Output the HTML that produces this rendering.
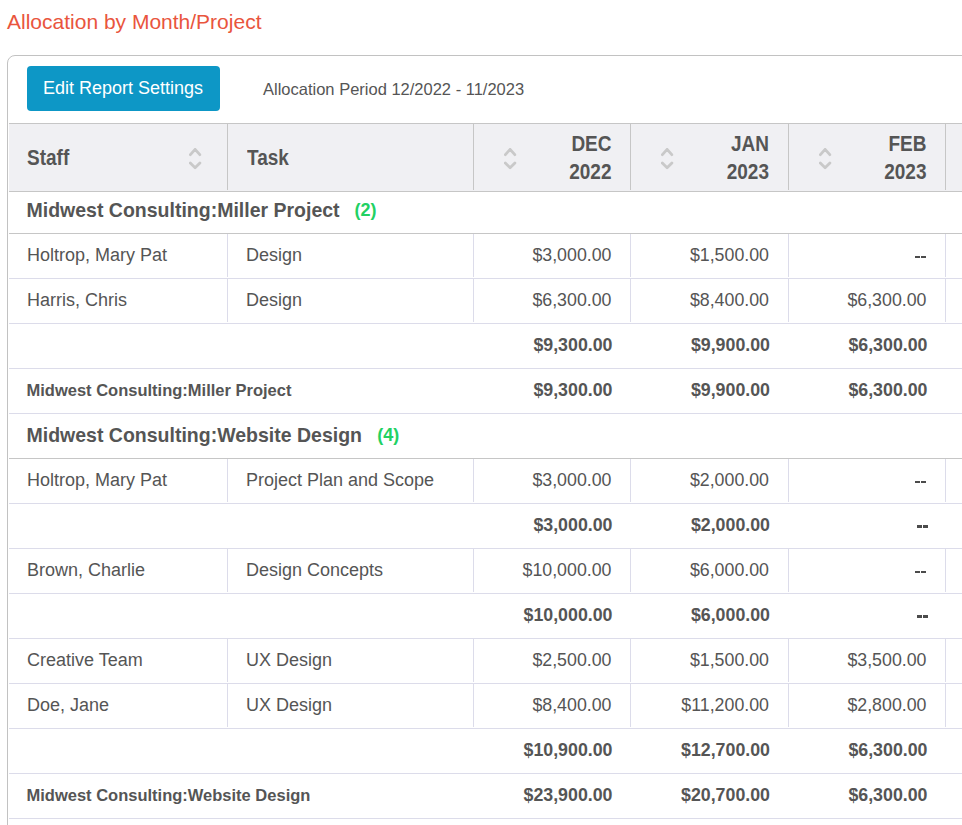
<!DOCTYPE html>
<html><head><meta charset="utf-8"><style>
html,body{margin:0;padding:0;background:#fff;width:962px;height:825px;overflow:hidden;position:relative}
.t{position:absolute;line-height:0;white-space:nowrap;font-family:"Liberation Sans", sans-serif}
.r{width:400px;text-align:right}
</style></head><body>
<div class="t" style="left:7px;top:22px;font-size:21px;font-weight:400;color:#e9553d;">Allocation by Month/Project</div>
<div style="position:absolute;left:7px;top:55px;width:1000px;height:900px;border:1px solid #c2c2c2;border-radius:8px;box-sizing:border-box"></div>
<div style="position:absolute;left:27px;top:66px;width:193px;height:45px;background:#0d97c6;border-radius:4px"></div>
<div class="t" style="left:43px;top:88px;font-size:18px;font-weight:400;color:#ffffff;">Edit Report Settings</div>
<div class="t" style="left:263px;top:89px;font-size:16.5px;font-weight:400;color:#555555;">Allocation Period 12/2022 - 11/2023</div>
<div style="position:absolute;left:9px;top:123px;width:960px;height:1px;background:#c6c6c6"></div>
<div style="position:absolute;left:9px;top:124px;width:960px;height:67px;background:#f0f0f3"></div>
<div style="position:absolute;left:9px;top:191px;width:960px;height:1px;background:#c6c6c6"></div>
<div style="position:absolute;left:227px;top:124px;width:1px;height:66px;background:#c6c6c6"></div>
<div style="position:absolute;left:473px;top:124px;width:1px;height:66px;background:#c6c6c6"></div>
<div style="position:absolute;left:630px;top:124px;width:1px;height:66px;background:#c6c6c6"></div>
<div style="position:absolute;left:788px;top:124px;width:1px;height:66px;background:#c6c6c6"></div>
<div style="position:absolute;left:945px;top:124px;width:1px;height:66px;background:#c6c6c6"></div>
<div class="t" style="left:27px;top:159px;font-size:19px;font-weight:700;color:#555555;transform:scaleY(1.16);transform-origin:0 6px;">Staff</div>
<div class="t" style="left:247px;top:159px;font-size:19px;font-weight:700;color:#555555;transform:scaleY(1.16);transform-origin:0 6px;">Task</div>
<div class="t r" style="left:211.5px;top:145px;font-size:19px;font-weight:700;color:#555555;transform:scaleY(1.16);transform-origin:0 6px;">DEC</div>
<div class="t r" style="left:211.5px;top:173px;font-size:19px;font-weight:700;color:#555555;transform:scaleY(1.16);transform-origin:0 6px;">2022</div>
<div class="t r" style="left:369px;top:145px;font-size:19px;font-weight:700;color:#555555;transform:scaleY(1.16);transform-origin:0 6px;">JAN</div>
<div class="t r" style="left:369px;top:173px;font-size:19px;font-weight:700;color:#555555;transform:scaleY(1.16);transform-origin:0 6px;">2023</div>
<div class="t r" style="left:526.5px;top:145px;font-size:19px;font-weight:700;color:#555555;transform:scaleY(1.16);transform-origin:0 6px;">FEB</div>
<div class="t r" style="left:526.5px;top:173px;font-size:19px;font-weight:700;color:#555555;transform:scaleY(1.16);transform-origin:0 6px;">2023</div>
<svg style="position:absolute;left:189px;top:148px" width="13" height="22" viewBox="0 0 13 22"><g fill="none" stroke="#c9c9c9" stroke-width="2.8" stroke-linecap="round" stroke-linejoin="round"><polyline points="1.4,6.7 6.1,1.3 10.8,6.7"/><polyline points="1.3,15.1 6.1,19.8 10.9,15.1"/></g></svg>
<svg style="position:absolute;left:504px;top:148px" width="13" height="22" viewBox="0 0 13 22"><g fill="none" stroke="#c9c9c9" stroke-width="2.8" stroke-linecap="round" stroke-linejoin="round"><polyline points="1.4,6.7 6.1,1.3 10.8,6.7"/><polyline points="1.3,15.1 6.1,19.8 10.9,15.1"/></g></svg>
<svg style="position:absolute;left:661px;top:148px" width="13" height="22" viewBox="0 0 13 22"><g fill="none" stroke="#c9c9c9" stroke-width="2.8" stroke-linecap="round" stroke-linejoin="round"><polyline points="1.4,6.7 6.1,1.3 10.8,6.7"/><polyline points="1.3,15.1 6.1,19.8 10.9,15.1"/></g></svg>
<svg style="position:absolute;left:819px;top:148px" width="13" height="22" viewBox="0 0 13 22"><g fill="none" stroke="#c9c9c9" stroke-width="2.8" stroke-linecap="round" stroke-linejoin="round"><polyline points="1.4,6.7 6.1,1.3 10.8,6.7"/><polyline points="1.3,15.1 6.1,19.8 10.9,15.1"/></g></svg>
<div style="position:absolute;left:9px;top:233px;width:960px;height:1px;background:#c6c6c6"></div>
<div class="t" style="left:26.5px;top:210px;font-size:19.5px;font-weight:700;color:#555555;transform:scaleY(1.07);transform-origin:0 7px;">Midwest Consulting:Miller Project</div>
<div class="t" style="left:354.5px;top:210px;font-size:18px;font-weight:700;color:#22d163;">(2)</div>
<div style="position:absolute;left:9px;top:278px;width:960px;height:1px;background:#dcdcea"></div>
<div style="position:absolute;left:227px;top:234px;width:1px;height:43px;background:#dcdcea"></div>
<div style="position:absolute;left:473px;top:234px;width:1px;height:43px;background:#dcdcea"></div>
<div style="position:absolute;left:630px;top:234px;width:1px;height:43px;background:#dcdcea"></div>
<div style="position:absolute;left:788px;top:234px;width:1px;height:43px;background:#dcdcea"></div>
<div style="position:absolute;left:945px;top:234px;width:1px;height:43px;background:#dcdcea"></div>
<div class="t" style="left:27px;top:255px;font-size:18px;font-weight:400;color:#555555;">Holtrop, Mary Pat</div>
<div class="t" style="left:246px;top:255px;font-size:18px;font-weight:400;color:#555555;">Design</div>
<div class="t r" style="left:211.5px;top:255px;font-size:17.8px;font-weight:400;color:#555555;">$3,000.00</div>
<div class="t r" style="left:369px;top:255px;font-size:17.8px;font-weight:400;color:#555555;">$1,500.00</div>
<div style="position:absolute;left:915px;top:256px;width:5px;height:2px;background:#4b4b4b"></div>
<div style="position:absolute;left:921px;top:256px;width:5px;height:2px;background:#4b4b4b"></div>
<div style="position:absolute;left:9px;top:323px;width:960px;height:1px;background:#dcdcea"></div>
<div style="position:absolute;left:227px;top:279px;width:1px;height:43px;background:#dcdcea"></div>
<div style="position:absolute;left:473px;top:279px;width:1px;height:43px;background:#dcdcea"></div>
<div style="position:absolute;left:630px;top:279px;width:1px;height:43px;background:#dcdcea"></div>
<div style="position:absolute;left:788px;top:279px;width:1px;height:43px;background:#dcdcea"></div>
<div style="position:absolute;left:945px;top:279px;width:1px;height:43px;background:#dcdcea"></div>
<div class="t" style="left:27px;top:300px;font-size:18px;font-weight:400;color:#555555;">Harris, Chris</div>
<div class="t" style="left:246px;top:300px;font-size:18px;font-weight:400;color:#555555;">Design</div>
<div class="t r" style="left:211.5px;top:300px;font-size:17.8px;font-weight:400;color:#555555;">$6,300.00</div>
<div class="t r" style="left:369px;top:300px;font-size:17.8px;font-weight:400;color:#555555;">$8,400.00</div>
<div class="t r" style="left:526.5px;top:300px;font-size:17.8px;font-weight:400;color:#555555;">$6,300.00</div>
<div style="position:absolute;left:9px;top:368px;width:960px;height:1px;background:#dcdcea"></div>
<div class="t r" style="left:212.5px;top:345px;font-size:17.8px;font-weight:700;color:#555555;">$9,300.00</div>
<div class="t r" style="left:370px;top:345px;font-size:17.8px;font-weight:700;color:#555555;">$9,900.00</div>
<div class="t r" style="left:527.5px;top:345px;font-size:17.8px;font-weight:700;color:#555555;">$6,300.00</div>
<div style="position:absolute;left:9px;top:413px;width:960px;height:1px;background:#dcdcea"></div>
<div class="t" style="left:26.5px;top:390px;font-size:16.5px;font-weight:700;color:#555555;">Midwest Consulting:Miller Project</div>
<div class="t r" style="left:212.5px;top:390px;font-size:17.8px;font-weight:700;color:#555555;">$9,300.00</div>
<div class="t r" style="left:370px;top:390px;font-size:17.8px;font-weight:700;color:#555555;">$9,900.00</div>
<div class="t r" style="left:527.5px;top:390px;font-size:17.8px;font-weight:700;color:#555555;">$6,300.00</div>
<div style="position:absolute;left:9px;top:458px;width:960px;height:1px;background:#c6c6c6"></div>
<div class="t" style="left:26.5px;top:435px;font-size:19.5px;font-weight:700;color:#555555;transform:scaleY(1.07);transform-origin:0 7px;">Midwest Consulting:Website Design</div>
<div class="t" style="left:377.3px;top:435px;font-size:18px;font-weight:700;color:#22d163;">(4)</div>
<div style="position:absolute;left:9px;top:503px;width:960px;height:1px;background:#dcdcea"></div>
<div style="position:absolute;left:227px;top:459px;width:1px;height:43px;background:#dcdcea"></div>
<div style="position:absolute;left:473px;top:459px;width:1px;height:43px;background:#dcdcea"></div>
<div style="position:absolute;left:630px;top:459px;width:1px;height:43px;background:#dcdcea"></div>
<div style="position:absolute;left:788px;top:459px;width:1px;height:43px;background:#dcdcea"></div>
<div style="position:absolute;left:945px;top:459px;width:1px;height:43px;background:#dcdcea"></div>
<div class="t" style="left:27px;top:480px;font-size:18px;font-weight:400;color:#555555;">Holtrop, Mary Pat</div>
<div class="t" style="left:246px;top:480px;font-size:18px;font-weight:400;color:#555555;">Project Plan and Scope</div>
<div class="t r" style="left:211.5px;top:480px;font-size:17.8px;font-weight:400;color:#555555;">$3,000.00</div>
<div class="t r" style="left:369px;top:480px;font-size:17.8px;font-weight:400;color:#555555;">$2,000.00</div>
<div style="position:absolute;left:915px;top:481px;width:5px;height:2px;background:#4b4b4b"></div>
<div style="position:absolute;left:921px;top:481px;width:5px;height:2px;background:#4b4b4b"></div>
<div style="position:absolute;left:9px;top:548px;width:960px;height:1px;background:#dcdcea"></div>
<div class="t r" style="left:212.5px;top:525px;font-size:17.8px;font-weight:700;color:#555555;">$3,000.00</div>
<div class="t r" style="left:370px;top:525px;font-size:17.8px;font-weight:700;color:#555555;">$2,000.00</div>
<div style="position:absolute;left:917px;top:525px;width:5px;height:3px;background:#4b4b4b"></div>
<div style="position:absolute;left:923px;top:525px;width:5px;height:3px;background:#4b4b4b"></div>
<div style="position:absolute;left:9px;top:593px;width:960px;height:1px;background:#dcdcea"></div>
<div style="position:absolute;left:227px;top:549px;width:1px;height:43px;background:#dcdcea"></div>
<div style="position:absolute;left:473px;top:549px;width:1px;height:43px;background:#dcdcea"></div>
<div style="position:absolute;left:630px;top:549px;width:1px;height:43px;background:#dcdcea"></div>
<div style="position:absolute;left:788px;top:549px;width:1px;height:43px;background:#dcdcea"></div>
<div style="position:absolute;left:945px;top:549px;width:1px;height:43px;background:#dcdcea"></div>
<div class="t" style="left:27px;top:570px;font-size:18px;font-weight:400;color:#555555;">Brown, Charlie</div>
<div class="t" style="left:246px;top:570px;font-size:18px;font-weight:400;color:#555555;">Design Concepts</div>
<div class="t r" style="left:211.5px;top:570px;font-size:17.8px;font-weight:400;color:#555555;">$10,000.00</div>
<div class="t r" style="left:369px;top:570px;font-size:17.8px;font-weight:400;color:#555555;">$6,000.00</div>
<div style="position:absolute;left:915px;top:571px;width:5px;height:2px;background:#4b4b4b"></div>
<div style="position:absolute;left:921px;top:571px;width:5px;height:2px;background:#4b4b4b"></div>
<div style="position:absolute;left:9px;top:638px;width:960px;height:1px;background:#dcdcea"></div>
<div class="t r" style="left:212.5px;top:615px;font-size:17.8px;font-weight:700;color:#555555;">$10,000.00</div>
<div class="t r" style="left:370px;top:615px;font-size:17.8px;font-weight:700;color:#555555;">$6,000.00</div>
<div style="position:absolute;left:917px;top:615px;width:5px;height:3px;background:#4b4b4b"></div>
<div style="position:absolute;left:923px;top:615px;width:5px;height:3px;background:#4b4b4b"></div>
<div style="position:absolute;left:9px;top:683px;width:960px;height:1px;background:#dcdcea"></div>
<div style="position:absolute;left:227px;top:639px;width:1px;height:43px;background:#dcdcea"></div>
<div style="position:absolute;left:473px;top:639px;width:1px;height:43px;background:#dcdcea"></div>
<div style="position:absolute;left:630px;top:639px;width:1px;height:43px;background:#dcdcea"></div>
<div style="position:absolute;left:788px;top:639px;width:1px;height:43px;background:#dcdcea"></div>
<div style="position:absolute;left:945px;top:639px;width:1px;height:43px;background:#dcdcea"></div>
<div class="t" style="left:27px;top:660px;font-size:18px;font-weight:400;color:#555555;">Creative Team</div>
<div class="t" style="left:246px;top:660px;font-size:18px;font-weight:400;color:#555555;">UX Design</div>
<div class="t r" style="left:211.5px;top:660px;font-size:17.8px;font-weight:400;color:#555555;">$2,500.00</div>
<div class="t r" style="left:369px;top:660px;font-size:17.8px;font-weight:400;color:#555555;">$1,500.00</div>
<div class="t r" style="left:526.5px;top:660px;font-size:17.8px;font-weight:400;color:#555555;">$3,500.00</div>
<div style="position:absolute;left:9px;top:728px;width:960px;height:1px;background:#dcdcea"></div>
<div style="position:absolute;left:227px;top:684px;width:1px;height:43px;background:#dcdcea"></div>
<div style="position:absolute;left:473px;top:684px;width:1px;height:43px;background:#dcdcea"></div>
<div style="position:absolute;left:630px;top:684px;width:1px;height:43px;background:#dcdcea"></div>
<div style="position:absolute;left:788px;top:684px;width:1px;height:43px;background:#dcdcea"></div>
<div style="position:absolute;left:945px;top:684px;width:1px;height:43px;background:#dcdcea"></div>
<div class="t" style="left:27px;top:705px;font-size:18px;font-weight:400;color:#555555;">Doe, Jane</div>
<div class="t" style="left:246px;top:705px;font-size:18px;font-weight:400;color:#555555;">UX Design</div>
<div class="t r" style="left:211.5px;top:705px;font-size:17.8px;font-weight:400;color:#555555;">$8,400.00</div>
<div class="t r" style="left:369px;top:705px;font-size:17.8px;font-weight:400;color:#555555;">$11,200.00</div>
<div class="t r" style="left:526.5px;top:705px;font-size:17.8px;font-weight:400;color:#555555;">$2,800.00</div>
<div style="position:absolute;left:9px;top:773px;width:960px;height:1px;background:#dcdcea"></div>
<div class="t r" style="left:212.5px;top:750px;font-size:17.8px;font-weight:700;color:#555555;">$10,900.00</div>
<div class="t r" style="left:370px;top:750px;font-size:17.8px;font-weight:700;color:#555555;">$12,700.00</div>
<div class="t r" style="left:527.5px;top:750px;font-size:17.8px;font-weight:700;color:#555555;">$6,300.00</div>
<div style="position:absolute;left:9px;top:818px;width:960px;height:1px;background:#dcdcea"></div>
<div class="t" style="left:26.5px;top:795px;font-size:16.5px;font-weight:700;color:#555555;">Midwest Consulting:Website Design</div>
<div class="t r" style="left:212.5px;top:795px;font-size:17.8px;font-weight:700;color:#555555;">$23,900.00</div>
<div class="t r" style="left:370px;top:795px;font-size:17.8px;font-weight:700;color:#555555;">$20,700.00</div>
<div class="t r" style="left:527.5px;top:795px;font-size:17.8px;font-weight:700;color:#555555;">$6,300.00</div>
</body></html>
